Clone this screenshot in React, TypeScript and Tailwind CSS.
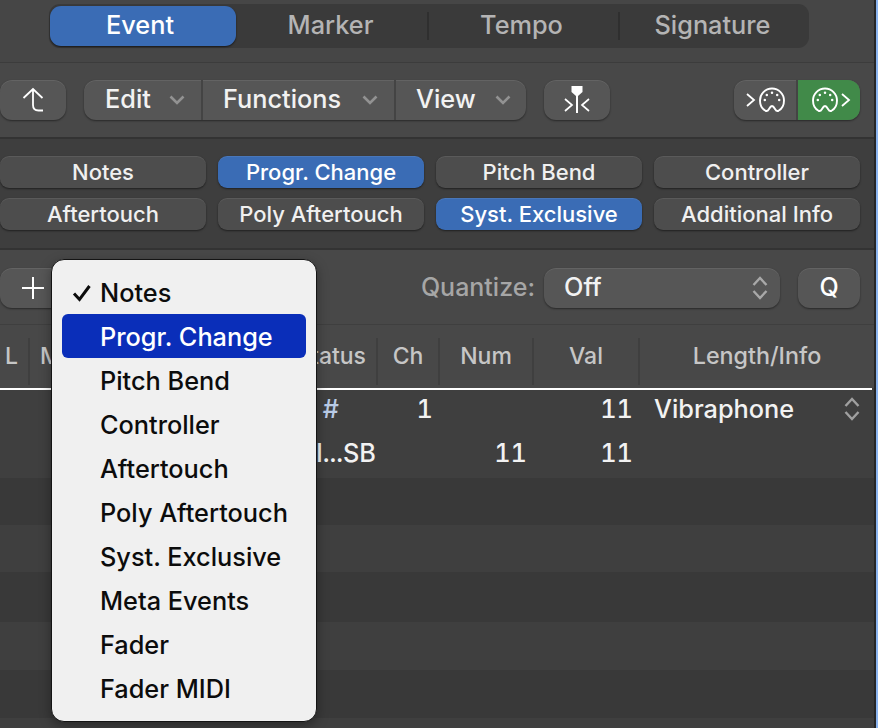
const font = "font-['Inter','Liberation_Sans',sans-serif]";

function Chevron() {
  return (
    <svg width="16" height="10" viewBox="0 0 16 10" fill="none" className="shrink-0">
      <path d="M1.5 1.5L8 8L14.5 1.5" stroke="#929292" strokeWidth="2.6" />
    </svg>
  );
}

function UpDown({ color = "#a8a8a8" }: { color?: string }) {
  return (
    <svg width="16" height="24" viewBox="0 0 16 24" fill="none">
      <path d="M1.5 9L8 2L14.5 9M1.5 15L8 22L14.5 15" stroke={color} strokeWidth="2.4" />
    </svg>
  );
}

function Din({ flip }: { flip?: boolean }) {
  return (
    <svg width="44" height="26" viewBox="0 0 44 26" fill="none">
      <path
        d={flip ? "M35 7L42 13L35 19" : "M4 7L11 13L4 19"}
        stroke="white"
        strokeWidth="1.8"
      />
      <g transform={flip ? "translate(5 0)" : "translate(16 0)"}>
        <path
          d="M6.5 23.8C3 21.8 1 17.8 1 13.5C1 7 6.2 1.5 13 1.5C19.8 1.5 25 7 25 13.5C25 17.8 23 21.8 19.5 23.8C17.8 24.6 16.8 23.4 16 22C15 20.2 14.2 19 13 19C11.8 19 11 20.2 10 22C9.2 23.4 8.2 24.6 6.5 23.8Z"
          stroke="white"
          strokeWidth="1.9"
        />
        <g fill="white">
          <circle cx="13" cy="5.8" r="1.25" />
          <circle cx="7.8" cy="8" r="1.25" />
          <circle cx="18.2" cy="8" r="1.25" />
          <circle cx="5.8" cy="13" r="1.25" />
          <circle cx="20.2" cy="13" r="1.25" />
        </g>
      </g>
    </svg>
  );
}

const btn =
  "bg-[#565656] rounded-[12px] shadow-[0_1px_2px_rgba(0,0,0,0.45),inset_0_1px_0_rgba(255,255,255,0.08)]";

function Filter({ label, on }: { label: string; on?: boolean }) {
  return (
    <div
      className={`h-8 rounded-[9px] flex items-center justify-center text-[22px] text-[#f0f0f0] shadow-[0_1px_2px_rgba(0,0,0,0.5),inset_0_1px_0_rgba(255,255,255,0.08)] ${
        on ? "bg-[#3a6cb5] text-white" : "bg-[#4d4d4d]"
      }`}
    >
      {label}
    </div>
  );
}

function Head({ label, className }: { label: string; className: string }) {
  return (
    <div
      className={`h-[47px] pb-[10px] flex items-center justify-center text-[23px] text-[#c6c6c6] border-r-2 border-[#3f3f3f] ${className}`}
    >
      {label}
    </div>
  );
}

const menu = [
  "Notes",
  "Progr. Change",
  "Pitch Bend",
  "Controller",
  "Aftertouch",
  "Poly Aftertouch",
  "Syst. Exclusive",
  "Meta Events",
  "Fader",
  "Fader MIDI",
];

const rows = [
  { bg: "#3f3f3f", h: "h-[44px]" },
  { bg: "#3f3f3f", h: "h-[44px]" },
  { bg: "#393939", h: "h-[47px]" },
  { bg: "#3f3f3f", h: "h-[47px]" },
  { bg: "#393939", h: "h-[50px]" },
  { bg: "#3f3f3f", h: "h-[48px]" },
  { bg: "#393939", h: "h-[48px]" },
  { bg: "#3f3f3f", h: "h-[48px]" },
];

export default function App() {
  return (
    <div className={`relative w-[878px] h-[728px] overflow-hidden bg-[#3f3f3f] flex font-[450] ${font}`}>
      <div className="w-[874px] h-full flex flex-col shrink-0">
        {/* tabs */}
        <div className="h-[63px] shrink-0 bg-[#464646] border-b border-[#3c3c3c] pt-1 pl-[49px]">
          <div className="w-[760px] h-[44px] rounded-[11px] bg-[#3a3a3a] flex items-center text-[25.3px] text-[#b4b4b4]">
            <div className="w-[186px] h-10 ml-px pr-[6px] pb-[2px] rounded-[11px] bg-[#3a6cb5] text-white flex items-center justify-center shadow-[0_1px_2px_rgba(0,0,0,0.6)]">
              Event
            </div>
            <div className="w-[191px] pr-[2px] pb-[2px] flex justify-center">Marker</div>
            <div className="w-[2px] h-7 bg-[#2f2f2f]" />
            <div className="w-[189px] pr-1 pb-[2px] flex justify-center">Tempo</div>
            <div className="w-[2px] h-7 bg-[#2f2f2f]" />
            <div className="flex-1 pr-1 pb-[2px] flex justify-center">Signature</div>
          </div>
        </div>

        {/* toolbar */}
        <div className="h-[76px] shrink-0 bg-[#484848] border-b-2 border-[#333333] flex items-start pt-[17px]">
          <div className={`${btn} w-[66px] h-10 flex items-center justify-center`}>
            <svg width="22" height="26" viewBox="0 0 22 26" fill="none">
              <path
                d="M1.5 11L11 2L20.5 11M11 2V18C11 21.5 13 23.5 16.5 23.5H21"
                stroke="white"
                strokeWidth="1.8"
              />
            </svg>
          </div>
          <div className={`${btn} ml-[18px] w-[442px] h-10 flex items-center text-[25.3px] text-[#f2f2f2]`}>
            <div className="w-[119px] h-full flex items-center pl-[21px] pr-[16px] justify-between border-r-2 border-[#444444]">
              <span className="-mt-[2px]">Edit</span>
              <Chevron />
            </div>
            <div className="w-[193px] h-full flex items-center pl-[20px] pr-[16px] justify-between border-r-2 border-[#444444]">
              <span className="-mt-[2px]">Functions</span>
              <Chevron />
            </div>
            <div className="flex-1 h-full flex items-center pl-[20px] pr-[15px] justify-between">
              <span className="-mt-[2px]">View</span>
              <Chevron />
            </div>
          </div>
          <div className={`${btn} ml-[18px] w-[66px] h-10 flex items-center justify-center`}>
            <svg width="26" height="28" viewBox="0 0 26 28" fill="none">
              <path d="M7.5 0H18.5V6L14 10H12L7.5 6Z" fill="white" />
              <path d="M13 8V27" stroke="white" strokeWidth="2" />
              <path d="M1 13L8 19L1 25M25 13L18 19L25 25" stroke="white" strokeWidth="1.7" />
            </svg>
          </div>
          <div className={`${btn} ml-auto mr-[14px] w-[126px] h-10 flex overflow-hidden`}>
            <div className="w-[64px] h-full flex items-center justify-center border-r-2 border-[#444444]">
              <Din />
            </div>
            <div className="flex-1 h-full bg-[#418a49] flex items-center justify-center">
              <Din flip />
            </div>
          </div>
        </div>

        {/* filters */}
        <div className="h-[111px] shrink-0 bg-[#3e3e3e] border-b-2 border-[#333333] pt-[17px] pr-[14px] grid grid-cols-4 gap-x-3 gap-y-[10px] content-start">
          <Filter label="Notes" />
          <Filter label="Progr. Change" on />
          <Filter label="Pitch Bend" />
          <Filter label="Controller" />
          <Filter label="Aftertouch" />
          <Filter label="Poly Aftertouch" />
          <Filter label="Syst. Exclusive" on />
          <Filter label="Additional Info" />
        </div>

        {/* quantize row */}
        <div className="h-[75px] shrink-0 bg-[#484848] border-b border-[#3f3f3f] flex items-start pt-[18px]">
          <div className={`${btn} w-[80px] h-10 flex items-center pl-[21px]`}>
            <svg width="24" height="24" viewBox="0 0 24 24" fill="none">
              <path d="M12 1V23M1 12H23" stroke="white" strokeWidth="2" />
            </svg>
          </div>
          <span className="ml-auto text-[25px] leading-[38px] text-[#a6a6a6]">Quantize:</span>
          <div className={`${btn} ml-[9px] w-[236px] h-10 flex items-center justify-between pl-5 pr-[12px] text-[25.3px] text-[#f2f2f2]`}>
            <span className="-mt-[2px]">Off</span>
            <UpDown />
          </div>
          <div className={`${btn} ml-[18px] mr-[14px] w-[62px] h-10 flex items-center justify-center text-[25px] font-medium text-white`}>
            Q
          </div>
        </div>

        {/* table header */}
        <div className="h-[63px] shrink-0 bg-[#484848] pt-[13px] flex items-start">
          <Head label="L" className="w-[30px] !justify-start pl-[5px]" />
          <Head label="M" className="w-[50px] !justify-start pl-[10px]" />
          <div className="w-[232px] h-[47px]" />
          <Head label="Status" className="w-[66px] !justify-end pr-[10px]" />
          <Head label="Ch" className="w-[62px]" />
          <Head label="Num" className="w-[94px]" />
          <Head label="Val" className="w-[106px]" />
          <div className="flex-1 h-[47px] pb-[11px] flex items-center justify-center text-[23.3px] text-[#c6c6c6]">
            Length/Info
          </div>
        </div>
        <div className="h-[2px] shrink-0 bg-white w-[872px]" />

        {/* rows */}
        <div className="flex-1 flex flex-col text-[25.3px] text-[#f2f2f2] tabular-nums">
          {rows.map((r, i) => (
            <div key={i} style={{ background: r.bg }} className={`${r.h} shrink-0 pb-[6px] flex items-center`}>
              {i === 0 && (
                <>
                  <span className="w-[339px] text-right text-[#b9cbe6]">#</span>
                  <span className="w-[94px] text-right">1</span>
                  <span className="w-[200px] text-right">11</span>
                  <span className="ml-[21px] flex-1">Vibraphone</span>
                  <span className="mr-[14px]">
                    <UpDown color="#a0a0a0" />
                  </span>
                </>
              )}
              {i === 1 && (
                <>
                  <span className="w-[376px] text-right">Pl...SB</span>
                  <span className="w-[151px] text-right">11</span>
                  <span className="w-[106px] text-right">11</span>
                </>
              )}
            </div>
          ))}
        </div>
      </div>

      {/* window edge */}
      <div className="w-[2px] h-full bg-[#262626] shrink-0" />
      <div className="flex-1 h-full bg-[#8ab4f0]" />

      {/* menu */}
      <div className="absolute left-[51px] top-[259px] w-[266px] h-[463px] rounded-[13px] bg-[#f0f0f0] border border-[#141414] pt-[10px] px-[10px] text-[25.3px] text-[#0c0c0c] shadow-[0_4px_12px_rgba(0,0,0,0.35)]">
        {menu.map((m, i) => (
          <div
            key={m}
            className={`relative h-[44px] pt-[2px] rounded-[6px] flex items-center pl-[38px] ${
              i === 1 ? "bg-[#0a2eb9] text-white" : ""
            }`}
          >
            {i === 0 && (
              <svg
                width="20"
                height="18"
                viewBox="0 0 20 18"
                fill="none"
                className="absolute left-[10px] top-[14px]"
              >
                <path d="M2 9.5L7.5 15.5L17.5 2" stroke="#0c0c0c" strokeWidth="3" />
              </svg>
            )}
            {m}
          </div>
        ))}
      </div>
    </div>
  );
}
